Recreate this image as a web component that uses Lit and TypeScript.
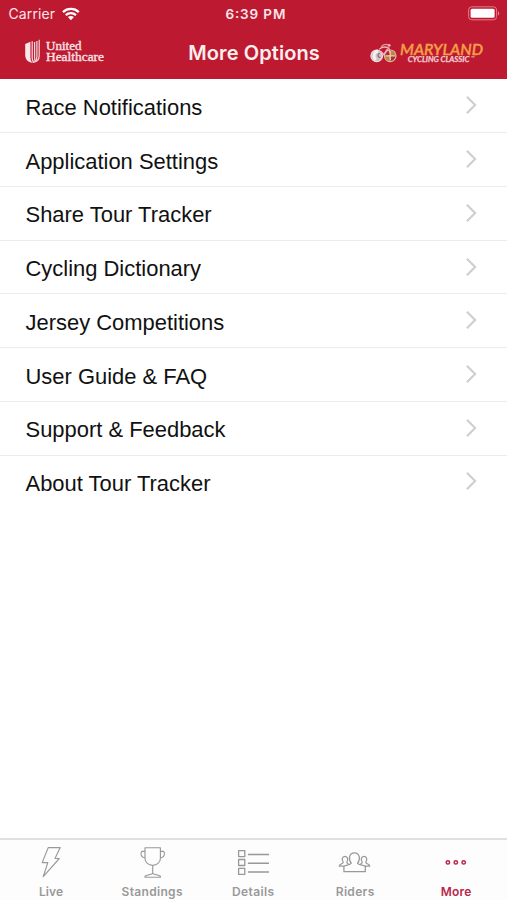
import { LitElement, html, css, svg } from "lit";
import { customElement, state } from "lit/decorators.js";
import { classMap } from "lit/directives/class-map.js";

const OPTIONS = [
  "Race Notifications",
  "Application Settings",
  "Share Tour Tracker",
  "Cycling Dictionary",
  "Jersey Competitions",
  "User Guide & FAQ",
  "Support & Feedback",
  "About Tour Tracker",
];

const bolt = svg`<path d="M17.2 4.6H29.2L24 15.5H28.3L12.2 33.7L16.8 19.6H11.2Z"/>`;
const trophy = svg`<path d="M12 4.7H27.4V15.5C27.4 19.5 23.8 22.3 19.7 22.3S12 19.5 12 15.5ZM12 8.3H8.8C6.9 10.5 8.2 14.8 12 14.8M27.4 8.3H30.6C32.5 10.5 31.2 14.8 27.4 14.8M19.7 22.3V30.4M12 34.2V33.2C14 31.8 17 31.8 19.7 30.4C22.4 31.8 25.4 31.8 27.4 33.2V34.2Z"/>`;
const list = svg`<path stroke-width="1.3" d="M4.6 7.6H10.8V13.6H4.6ZM4.6 16.5H10.8V22.5H4.6ZM4.6 25.4H10.8V31.4H4.6Z"/><path stroke-width="1.5" d="M13.9 11.4H35M13.9 20.3H35M13.9 28.9H35"/>`;
const group = svg`<path stroke-width="1.25" d="M8.9 28.7V23.6C9.6 22 15.2 22.4 16.3 20.3C13.6 17.4 13.3 9.8 19.4 9.8S25.2 17.4 22.5 20.3C23.6 22.4 29.2 22 30.3 23.6V28.7ZM9 23.2H4.3C4.3 20.5 8.6 21 8.2 19.2C6.5 17 6.9 13.4 10 13.4S13.3 17 11.8 19.2C11.8 20.2 12.8 20.5 13.8 21.4M30 23.2H34.7C34.7 20.5 30.4 21 30.8 19.2C32.5 17 32.1 13.4 29 13.4S25.7 17 27.2 19.2C27.2 20.2 26.2 20.5 25.2 21.4"/>`;
const dots = svg`<g stroke-width="1.5"><circle cx="10.9" cy="19.4" r="1.7"/><circle cx="18.8" cy="19.4" r="1.7"/><circle cx="26.7" cy="19.4" r="1.7"/></g>`;

const TABS = [
  { label: "Live", icon: bolt, width: 24 },
  { label: "Standings", icon: trophy, width: 61 },
  { label: "Details", icon: list, width: 42 },
  { label: "Riders", icon: group, width: 38.5 },
  { label: "More", icon: dots, width: 30.5 },
];

@customElement("status-bar")
class StatusBar extends LitElement {
  static styles = css`
    :host { display: grid; grid-template-columns: 1fr auto 1fr; align-items: center; height: 27px; padding: 0 7px 0 8px; color: #fbe6e7; font: 14px Inter, sans-serif; }
    .carrier { display: flex; align-items: center; gap: 6px; }
    svg { display: block; }
    .battery { justify-self: end; }
  `;
  render() {
    return html`
      <div class="carrier">
        <svg width="48" height="20"><text x="0.5" y="15" font-size="14" fill="currentColor" textLength="46.5">Carrier</text></svg>
        <svg width="18" height="14" viewBox="0 0 18 14" fill="none" stroke="#fff" stroke-width="2.3">
          <path d="M1 5.1C5.4 .9 12.4 .9 16.8 5.1M3.8 8.1C6.7 5.4 11.1 5.4 14 8.1"/>
          <path fill="#fff" stroke="none" d="M8.9 13.2L5.9 10.1C7.7 8.7 10.1 8.7 11.9 10.1Z"/>
        </svg>
      </div>
      <svg width="64" height="20"><text x="3.4" y="15" font-size="13.5" font-weight="600" fill="currentColor" textLength="60">6:39 PM</text></svg>
      <svg class="battery" width="32" height="15" viewBox="0 0 32 15">
        <rect x=".6" y=".8" width="28" height="13" rx="3.2" fill="none" stroke="#e37d88"/>
        <rect x="2.6" y="2.8" width="24" height="9" rx="1.5" fill="#fff"/>
        <path d="M30 5.2C31.6 6 31.6 8.8 30 9.6Z" fill="#e8929b"/>
      </svg>`;
  }
}

@customElement("nav-header")
class NavHeader extends LitElement {
  static styles = css`
    :host { display: grid; grid-template-columns: 1fr auto 1fr; align-items: center; height: 52px; padding: 0 23px; }
    svg { display: block; }
    .serif { font-family: "Liberation Serif", serif; }
    .title { font-family: Inter, sans-serif; font-weight: 600; }
    .logo { font-family: Lato, sans-serif; font-style: italic; }
    .event { justify-self: end; }
  `;
  render() {
    return html`
      <svg width="84" height="32" viewBox="0 0 84 32">
        <path fill="#f9e6e8" d="M2.2 7.1L7.4 4.8V20C7.4 22.5 8 24 9.5 25.7C5 25.5 2.2 22.3 2.2 18Z"/>
        <g fill="none" stroke="#f3d3d7" stroke-width="1.25">
          <path d="M9.2 4.3V20.5C9.2 23 9.8 24.5 11 25.2"/>
          <path d="M11.6 5V20.5C11.6 22.5 11.9 23.5 12.3 24.5"/>
          <path d="M13.9 4V19.5C13.9 22 13.4 23.6 12.2 24.9"/>
          <path d="M16.2 2.8V18.6C16.2 22.2 14.2 25.2 9.6 25.4"/>
        </g>
        <g class="serif" fill="#f9e3e5" stroke="#f9e3e5" stroke-width=".35" font-size="12.2">
          <text x="23" y="13.4" textLength="35.5" lengthAdjust="spacingAndGlyphs">United</text>
          <text x="23" y="24.4" textLength="58" lengthAdjust="spacingAndGlyphs">Healthcare</text>
        </g>
      </svg>
      <svg class="title" width="134" height="32"><text x="1.3" y="22.6" font-size="20" fill="#fdeeee" textLength="131.5">More Options</text></svg>
      <svg class="event" width="115" height="32" viewBox="0 0 115 32">
        <g fill="none" stroke="#e8b3b8" stroke-width="1.2">
          <circle cx="7.7" cy="18.8" r="5.8" fill="#c9c3c5" stroke="#e6dddd"/>
          <path d="M9.2 14C4.8 14.8 3.6 19.8 6.8 23" stroke="#f7efef" stroke-width="3"/>
          <path d="M10.6 16C8 17.7 9 20.8 11.3 20.3" stroke="#a9566a"/>
          <circle cx="21.2" cy="18.8" r="5.8" fill="#a73036" stroke="#d9bda8"/>
          <path d="M21.2 18.8V13.5A5.3 5.3 0 0 1 26.5 18.8ZM21.2 18.8V24.1A5.3 5.3 0 0 1 15.9 18.8Z" fill="#d59a3f" fill-opacity=".75" stroke="none"/>
          <path d="M21.2 14V23.6M16.4 18.8H26" stroke="#e6d3b5" stroke-width="1.3"/>
          <path d="M10.3 12.4C13 9.4 16 9.4 19.8 11.2L21 15.8M11.6 14.2L14.8 17.6L18.6 12" stroke="#f2b5bc" stroke-width="1.4"/>
          <path d="M12.2 9.8C14.4 6.8 16.4 6.6 19.6 8" stroke="#e79aa4" stroke-width="1.3"/>
          <circle cx="20.2" cy="8.4" r="1.4" fill="#f2b5bc" stroke="none"/>
        </g>
        <g class="logo">
          <text x="31" y="17.6" font-size="15.4" font-weight="500" fill="#f5a047" stroke="#f5a047" stroke-width=".4" textLength="83" lengthAdjust="spacingAndGlyphs">MARYLAND</text>
          <text x="38.8" y="25.4" font-size="7.4" font-weight="700" fill="#f4cdd2" stroke="#f4cdd2" stroke-width=".25" textLength="61.5" lengthAdjust="spacingAndGlyphs">CYCLING CLASSIC</text>
          <text x="101.8" y="23" font-size="5.5" fill="#f4cdd2">™</text>
        </g>
      </svg>`;
  }
}

@customElement("option-list")
class OptionList extends LitElement {
  static styles = css`
    :host { display: block; font: 21.95px/26px "Liberation Sans", sans-serif; color: #111; }
    .row { display: flex; align-items: center; justify-content: space-between; box-sizing: border-box; height: 53.72px; padding: 4px 29px 0 25.5px; border-bottom: 1.5px solid #ececec; }
    .row:first-child { height: 54.3px; }
    .row:last-child { border-bottom-color: transparent; }
    svg { display: block; margin-bottom: 5px; }
  `;
  render() {
    return OPTIONS.map((o) => html`
      <div class="row">
        <span>${o}</span>
        <svg width="14" height="20" viewBox="0 0 14 20" fill="none" stroke="#cfcfd1" stroke-width="2.2"><path d="M2.9 1.8L11.1 10L2.9 18.2"/></svg>
      </div>`);
  }
}

@customElement("tab-bar")
class TabBar extends LitElement {
  static styles = css`
    :host { display: grid; grid-template-columns: repeat(5, 1fr); box-sizing: border-box; height: 62px; border-top: 2px solid #e0e0e0; background: #fdfdfd; font-family: Inter, sans-serif; font-weight: 600; }
    .tab { display: flex; flex-direction: column; align-items: center; padding-top: 3px; color: #999; }
    .tab.active { color: #b9274a; }
    svg { display: block; }
    .icon { fill: none; stroke: currentColor; stroke-width: 1.15; stroke-linejoin: round; }
  `;
  @state() private active = "More";
  render() {
    return TABS.map((t) => html`
      <div class=${classMap({ tab: true, active: t.label === this.active })} @click=${() => (this.active = t.label)}>
        <svg class="icon" width="39" height="39">${t.icon}</svg>
        <svg width="70" height="18"><text x=${35 - t.width / 2} y="13.6" font-size="12" fill="currentColor" textLength=${t.width}>${t.label}</text></svg>
      </div>`);
  }
}

@customElement("app-root")
class AppRoot extends LitElement {
  static styles = css`
    :host { display: flex; flex-direction: column; height: 900px; background: #fff; overflow: hidden; }
    .top { background: #bd1a31; height: 79px; flex: none; }
    .content { flex: 1; }
  `;
  render() {
    return html`
      <header class="top"><status-bar></status-bar><nav-header></nav-header></header>
      <option-list class="content"></option-list>
      <tab-bar></tab-bar>`;
  }
}
